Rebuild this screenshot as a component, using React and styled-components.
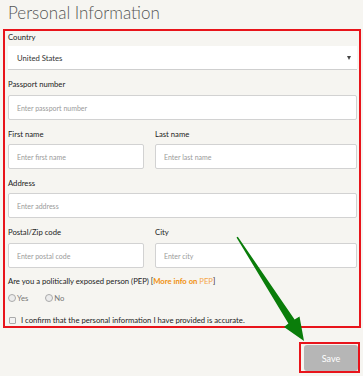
import React from "react";
import styled, { createGlobalStyle } from "styled-components";

const GlobalStyle = createGlobalStyle`
  html, body {
    margin: 0;
    padding: 0;
    background: #f6f5f1;
    font-family: Lato, "Open Sans", sans-serif;
    color: #222;
  }
  * { box-sizing: border-box; }
`;

const Page = styled.div`
  position: relative;
  width: 363px;
  height: 376px;
  padding: 0 2px 0 3px;
`;

const Heading = styled.h1`
  margin: 0;
  padding: 2px 0 0 5px;
  height: 29px;
  font-size: 17px;
  font-weight: 300;
  line-height: 22px;
  color: #555;
`;

const FormBox = styled.div`
  border: 2px solid #e8141b;
  padding: 0 2px 0 3px;
  width: 358px;
`;

const Inner = styled.div`
  display: flex;
  flex-direction: column;
`;

const Field = styled.div`
  display: flex;
  flex-direction: column;
  margin-top: ${(p) => p.$top ?? 8}px;
`;

const Label = styled.label`
  font-size: 7.7px;
  line-height: 12px;
  height: 12px;
  margin-bottom: ${(p) => p.$gap ?? 4}px;
  color: #222;
`;

const Select = styled.div`
  height: 24px;
  background: #fff;
  border-bottom: 1px solid #cfcfcf;
  display: flex;
  align-items: center;
  justify-content: space-between;
  padding: 0 6px 0 9px;
  font-size: 7.7px;
  color: #333;
`;

const Caret = styled.span`
  width: 0;
  height: 0;
  border-left: 2.5px solid transparent;
  border-right: 2.5px solid transparent;
  border-top: 4px solid #444;
`;

const Input = styled.input`
  height: 25px;
  width: 100%;
  background: #fff;
  border: 1px solid #d2d2d2;
  border-radius: 2px;
  padding: 0 8px;
  font-family: inherit;
  font-size: 7px;
  color: #333;
  outline: none;
  &::placeholder { color: #9a9a9a; }
`;

const Row = styled.div`
  display: grid;
  grid-template-columns: 136px 1fr;
  column-gap: 11px;
`;

const Question = styled.div`
  margin-top: 7px;
  font-size: 7.7px;
  line-height: 12px;
  color: #222;
`;

const More = styled.span`
  color: #f0900e;
  font-weight: 700;
`;

const Pep = styled.span`
  color: #f5a64a;
`;

const Options = styled.div`
  display: flex;
  gap: 17px;
  margin-top: 5px;
  height: 12px;
  align-items: center;
`;

const Option = styled.span`
  display: flex;
  align-items: center;
  gap: 1px;
  font-size: 7.7px;
  color: #777;
`;

const Radio = styled.span`
  display: block;
  flex-shrink: 0;
  width: 8px;
  height: 8px;
  border-radius: 50%;
  border: 1px solid #aaa;
  background: #ececec;
`;

const Confirm = styled.div`
  display: flex;
  align-items: center;
  gap: 5px;
  margin-top: 10px;
  padding-left: 1px;
  font-size: 7.7px;
  color: #222;
  height: 12px;
`;

const Box = styled.span`
  display: block;
  flex-shrink: 0;
  width: 7px;
  height: 7px;
  border: 1px solid #aaa;
  border-radius: 1px;
  background: #f2f2f2;
`;

const Footer = styled.div`
  display: flex;
  justify-content: flex-end;
  padding-top: 14px;
  padding-right: 1px;
`;

const Highlight = styled.div`
  border: 2px solid #e8141b;
  padding: 1px 0 0 3px;
  width: 61px;
  height: 31px;
`;

const SaveButton = styled.button`
  width: 54px;
  height: 26px;
  border: none;
  border-radius: 3px;
  background: #b6b6b6;
  color: #fff;
  font-family: inherit;
  font-size: 9px;
  padding: 0;
`;

const Arrow = styled.svg`
  position: absolute;
  left: 0;
  top: 0;
  pointer-events: none;
`;

export default function App() {
  return (
    <Page>
      <GlobalStyle />
      <Heading>Personal Information</Heading>
      <FormBox>
        <Inner>
          <Field $top={0}>
            <Label $gap={3}>Country</Label>
            <Select>
              United States
              <Caret />
            </Select>
          </Field>
          <Field $top={8}>
            <Label $gap={5}>Passport number</Label>
            <Input placeholder="Enter passport number" />
          </Field>
          <Row>
            <Field>
              <Label>First name</Label>
              <Input placeholder="Enter first name" />
            </Field>
            <Field>
              <Label>Last name</Label>
              <Input placeholder="Enter last name" />
            </Field>
          </Row>
          <Field>
            <Label>Address</Label>
            <Input placeholder="Enter address" />
          </Field>
          <Row>
            <Field>
              <Label $gap={5}>Postal/Zip code</Label>
              <Input placeholder="Enter postal code" />
            </Field>
            <Field>
              <Label $gap={5}>City</Label>
              <Input placeholder="Enter city" />
            </Field>
          </Row>
          <Question>
            Are you a politically exposed person (PEP) [<More>More info on </More>
            <Pep>PEP</Pep>]
          </Question>
          <Options>
            <Option>
              <Radio />
              Yes
            </Option>
            <Option>
              <Radio />
              No
            </Option>
          </Options>
          <Confirm>
            <Box />
            I confirm that the personal information I have provided is accurate.
          </Confirm>
        </Inner>
      </FormBox>
      <Footer>
        <Highlight>
          <SaveButton>Save</SaveButton>
        </Highlight>
      </Footer>
      <Arrow width="363" height="376" viewBox="0 0 363 376">
        <polygon
          points="236.5,237.5 237.8,236.8 294.6,319.6 299.5,316.5 304,341 284,327 288.4,323.5"
          fill="#0a7d0a"
        />
      </Arrow>
    </Page>
  );
}
